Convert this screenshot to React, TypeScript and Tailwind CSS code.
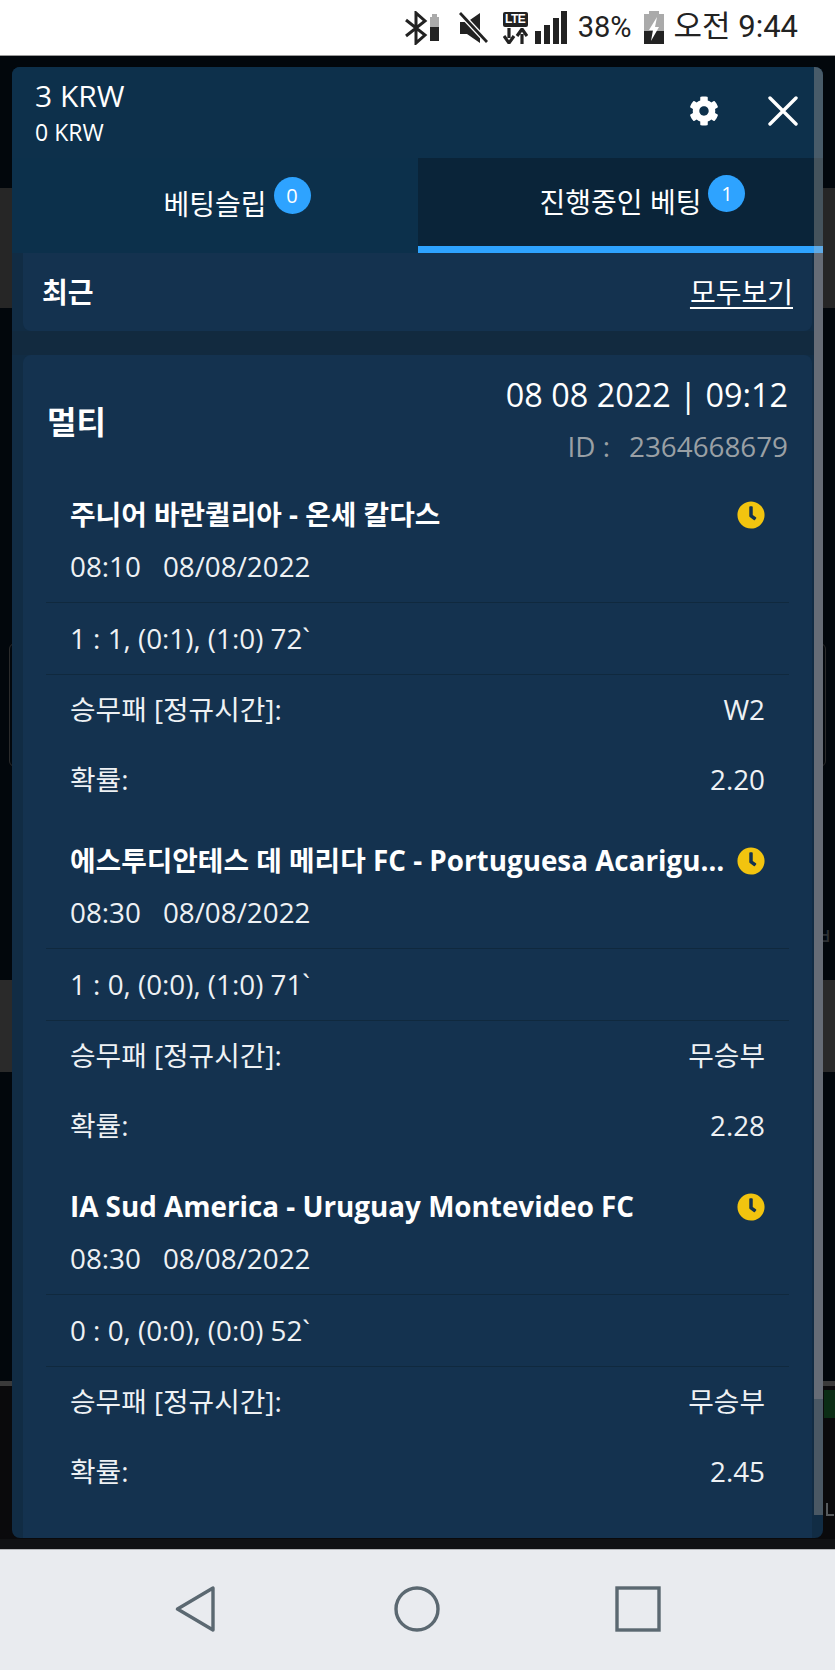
import { FaClock, FaCog } from 'react-icons/fa';

const SANS = "font-['Open_Sans','Noto_Sans_CJK_KR',sans-serif]";

interface Bet {
  title: string;
  time: string;
  score: string;
  pick: string;
  odds: string;
}

const BETS: Bet[] = [
  {
    title: '주니어 바란퀼리아 - 온세 칼다스',
    time: '08:10',
    score: '1 : 1, (0:1), (1:0) 72`',
    pick: 'W2',
    odds: '2.20',
  },
  {
    title: '에스투디안테스 데 메리다 FC - Portuguesa Acarigua FC',
    time: '08:30',
    score: '1 : 0, (0:0), (1:0) 71`',
    pick: '무승부',
    odds: '2.28',
  },
  {
    title: 'IA Sud America - Uruguay Montevideo FC',
    time: '08:30',
    score: '0 : 0, (0:0), (0:0) 52`',
    pick: '무승부',
    odds: '2.45',
  },
];

const StatusBar = () => (
  <div className="h-[56px] shrink-0 bg-white border-b border-[#9a9a9a] flex items-center justify-end pr-[37px] text-[#222] font-['Roboto','Noto_Sans_CJK_KR',sans-serif]">
    <svg width="34" height="34" viewBox="0 0 34 34" className="mr-[20px]">
      <path d="M1 9 L20 24 L11 32 L11 2 L20 10 L1 25" fill="none" stroke="#222" strokeWidth="3" />
      <rect x="27" y="3" width="5" height="4" fill="#aaa" />
      <rect x="25" y="6" width="9" height="10" fill="#aaa" />
      <rect x="25" y="16" width="9" height="14" fill="#222" />
    </svg>
    <svg width="29" height="32" viewBox="0 0 29 32" className="mr-[15px]">
      <path d="M1 10 H8 L21 1 V31 L8 22 H1 Z" fill="#222" />
      <path d="M1 1 L28 30" stroke="#fff" strokeWidth="5.5" />
      <path d="M1 1 L28 30" stroke="#222" strokeWidth="2.8" />
    </svg>
    <div className="relative w-[25px] h-[32px] mr-[7px]">
      <div className="h-[15px] bg-[#222] rounded-[2px] text-white text-[12px] leading-[15px] font-bold text-center font-['Liberation_Sans',sans-serif] tracking-[-0.5px]">LTE</div>
      <svg width="25" height="16" viewBox="0 0 25 16" className="absolute left-0 bottom-0">
        <path d="M6 0 V10 M1 8 L6 15 L11 8" fill="none" stroke="#222" strokeWidth="3.2" />
        <path d="M19 16 V6 M14 8 L19 1 L24 8" fill="none" stroke="#222" strokeWidth="3.2" />
      </svg>
    </div>
    <svg width="32" height="33" viewBox="0 0 32 33" className="mr-[11px]">
      <rect x="0" y="20" width="6" height="13" fill="#222" />
      <rect x="9" y="14" width="6" height="19" fill="#222" />
      <rect x="18" y="7" width="6" height="26" fill="#222" />
      <rect x="26" y="0" width="6" height="33" fill="#222" />
    </svg>
    <span className="mr-[13px] text-[29px]">38%</span>
    <svg width="20" height="33" viewBox="0 0 20 33" className="mr-[9px]">
      <rect x="5" y="0" width="10" height="4" fill="#aaa" />
      <rect x="0" y="3" width="20" height="17" fill="#aaa" />
      <rect x="0" y="20" width="20" height="13" fill="#222" />
      <path d="M13 6 L5 19 H9 L7 30 L15 16 H11 Z" fill="#fff" />
    </svg>
    <span className="text-[31px]">오전 9:44</span>
  </div>
);

const NavBar = () => (
  <div className="h-[121px] shrink-0 bg-[#e9ebef] border-t border-[#b5b7ba] relative">
    <div className="h-full flex items-center justify-center pb-[2px]">
      <svg width="40" height="46" viewBox="0 0 40 46" className="mr-[179px]">
        <path d="M2.5 23 L38 2 V44 Z" fill="none" stroke="#5b6871" strokeWidth="3.4" strokeLinejoin="round" />
      </svg>
      <svg width="46" height="46" viewBox="0 0 46 46" className="mr-[175px]">
        <circle cx="23" cy="23" r="21" fill="none" stroke="#5b6871" strokeWidth="3.4" />
      </svg>
      <svg width="46" height="46" viewBox="0 0 46 46">
        <rect x="2" y="2" width="42" height="42" fill="none" stroke="#5b6871" strokeWidth="3.4" />
      </svg>
    </div>
  </div>
);

const TabBadge = ({ count }: { count: number }) => (
  <span className="absolute left-full top-[-6px] ml-[7px] w-[37px] h-[37px] rounded-full bg-[#2ea3ff] text-white text-[20px] leading-none flex items-center justify-center">
    {count}
  </span>
);

const BetBlock = ({ bet }: { bet: Bet }) => (
  <div className="mb-[21px] text-white text-[27.8px]">
    <div className="h-[52px] pt-[1px] px-[24px] flex items-center gap-3">
      <span className="flex-1 min-w-0 truncate font-bold">{bet.title}</span>
      <FaClock className="shrink-0 text-[#f2c40f] w-[28px] h-[28px]" />
    </div>
    <div className="h-[63px] pb-[9px] px-[24px] flex items-center gap-[22px] text-[#eef1f4] border-b border-[#10293e]">
      <span>{bet.time}</span>
      <span>08/08/2022</span>
    </div>
    <div className="h-[72px] px-[24px] flex items-center text-[#eef1f4] border-b border-[#10293e]">
      {bet.score}
    </div>
    <div className="h-[72px] pb-[2px] px-[24px] flex items-center justify-between text-[#eef1f4]">
      <span>승무패 [정규시간]:</span>
      <span>{bet.pick}</span>
    </div>
    <div className="h-[66px] px-[24px] flex items-center justify-between text-[#eef1f4]">
      <span>확률:</span>
      <span>{bet.odds}</span>
    </div>
  </div>
);

// faint page content showing round the panel
const Backdrop = () => (
  <div className="absolute inset-0">
    <div className="absolute left-0 right-0 top-[132px] h-[120px] bg-[#262626]" />
    <div className="absolute left-[9px] right-[9px] top-[587px] h-[124px] rounded-md border border-[#2b2b2b]" />
    <div className="absolute right-[2px] top-[868px] text-[#2c3034] text-[24px] leading-none">ㅂ</div>
    <div className="absolute left-0 right-0 top-[924px] h-[92px] bg-[#2a2a2a]" />
    <div className="absolute left-0 right-0 top-[1325px] bottom-0 bg-[#0a0a0c]" />
    <div className="absolute left-0 right-0 top-[1325px] h-[5px] bg-[#3a3a3a]" />
    <div className="absolute right-0 top-[1334px] w-[11px] h-[28px] bg-[#0b2d15]" />
    <div className="absolute right-[1px] top-[1447px] w-[8px] h-[13px] border-b-2 border-l-2 border-[#55595c]" />
    <div className="absolute left-0 right-0 bottom-0 h-[10px] bg-[#111214]" />
  </div>
);

export default function App() {
  return (
    <div className={`w-[835px] h-[1670px] flex flex-col overflow-hidden bg-[#02070c] ${SANS}`}>
      <StatusBar />
      <div className="relative flex-1 pt-[11px] pl-[12px]">
        <Backdrop />
        <div className="relative w-[811px] h-[1471px] rounded-lg overflow-hidden bg-[#112c44] text-white flex flex-col">
          <div className="h-[91px] shrink-0 bg-[#0d304b] pl-[23px] pr-[25px] flex items-center justify-between">
            <div>
              <div className="text-[30px] leading-[40px] -mt-[2px]">3 KRW</div>
              <div className="text-[23px] leading-[30px] mt-[1px]">0 KRW</div>
            </div>
            <div className="flex items-center gap-[49px] pb-[4px]">
              <FaCog className="w-[30px] h-[30px]" />
              <svg width="30" height="30" viewBox="0 0 30 30">
                <path d="M2 2 L28 28 M28 2 L2 28" stroke="#fff" strokeWidth="3.4" strokeLinecap="round" />
              </svg>
            </div>
          </div>

          <div className="h-[95px] shrink-0 flex text-[28px]">
            <div className="w-[406px] bg-[#0c304b] flex items-center justify-center pb-[3px]">
              <span className="relative">
                베팅슬립
                <TabBadge count={0} />
              </span>
            </div>
            <div className="flex-1 bg-[#0a2439] border-b-[7px] border-[#2ea3ff] flex items-center justify-center">
              <span className="relative">
                진행중인 베팅
                <TabBadge count={1} />
              </span>
            </div>
          </div>

          <div className="flex-1 min-h-0 px-[11px] flex flex-col">
            <div className="h-[78px] shrink-0 rounded-b-lg bg-[#14324f] px-[19px] flex items-center justify-between text-[28px]">
              <span className="font-bold">최근</span>
              <span className="underline underline-offset-4">모두보기</span>
            </div>

            <div className="h-[24px] shrink-0 -mx-[11px] bg-[#122a3f]" />

            <div className="flex-1 min-h-0 rounded-t-lg bg-[#14324f]">
              <div className="h-[133px] px-[24px] flex items-center justify-between">
                <span className="font-bold text-[32px] mt-[1px]">멀티</span>
                <div className="self-start pt-[15px] text-right">
                  <div className="text-[32.4px] leading-[48px]">08 08 2022 | 09:12</div>
                  <div className="text-[27.8px] leading-[56px] text-[#9aa0a5]">
                    ID :<span className="ml-[19px]">2364668679</span>
                  </div>
                </div>
              </div>
              <div className="px-[23px]">
                {BETS.map((bet) => (
                  <BetBlock key={bet.title} bet={bet} />
                ))}
              </div>
            </div>
          </div>

          {/* scrollbar sits on top of the panel */}
          <div className="absolute right-0 top-0 w-[9px] h-[1448px] bg-[#cfc1b1]/30" />
          <div className="absolute right-0 top-[186px] w-[9px] h-[1146px] bg-[#666c76]" />
        </div>
      </div>
      <NavBar />
    </div>
  );
}
